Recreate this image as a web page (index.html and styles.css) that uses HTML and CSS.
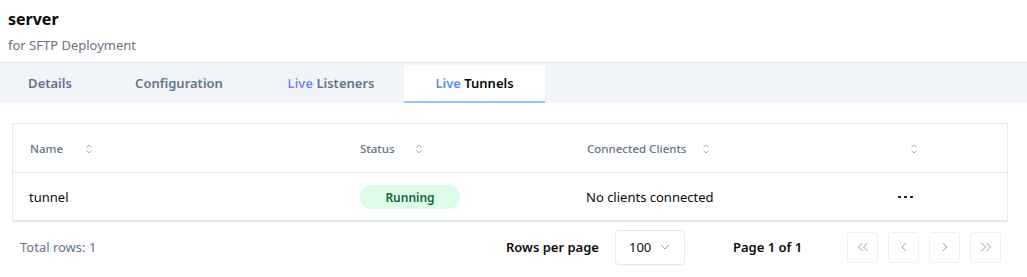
FILE: index.html
```html
<!DOCTYPE html>
<html>
<head>
<meta charset="utf-8">
<link rel="stylesheet" href="styles.css">
</head>
<body>
<header class="page-head">
  <h1 class="title">server</h1>
  <p class="subtitle">for SFTP Deployment</p>
</header>
<nav class="tabs">
  <div class="tab tab-details">Details</div>
  <div class="tab tab-config">Configuration</div>
  <div class="tab tab-listeners"><span class="live">Live</span> Listeners</div>
  <div class="tab tab-tunnels active"><span class="live-active">Live</span> Tunnels</div>
</nav>
<main class="content">
  <div class="table-card">
    <div class="row head-row">
      <div class="cell c-name"><span>Name</span><svg class="sort" viewBox="0 0 8 12"><path d="M1.5 4.5 L4 2 L6.5 4.5 M1.5 7.5 L4 10 L6.5 7.5" fill="none" stroke="currentColor" stroke-width="1"/></svg></div>
      <div class="cell c-status"><span>Status</span><svg class="sort" viewBox="0 0 8 12"><path d="M1.5 4.5 L4 2 L6.5 4.5 M1.5 7.5 L4 10 L6.5 7.5" fill="none" stroke="currentColor" stroke-width="1"/></svg></div>
      <div class="cell c-clients"><span>Connected Clients</span><svg class="sort" viewBox="0 0 8 12"><path d="M1.5 4.5 L4 2 L6.5 4.5 M1.5 7.5 L4 10 L6.5 7.5" fill="none" stroke="currentColor" stroke-width="1"/></svg></div>
      <div class="cell c-actions"><svg class="sort" viewBox="0 0 8 12"><path d="M1.5 4.5 L4 2 L6.5 4.5 M1.5 7.5 L4 10 L6.5 7.5" fill="none" stroke="currentColor" stroke-width="1"/></svg></div>
    </div>
    <div class="row body-row">
      <div class="cell c-name">tunnel</div>
      <div class="cell c-status"><span class="pill">Running</span></div>
      <div class="cell c-clients">No clients connected</div>
      <div class="cell c-actions"><span class="dots"><i></i><i></i><i></i></span></div>
    </div>
  </div>
  <div class="footer">
    <div class="total">Total rows: 1</div>
    <div class="rpp">Rows per page</div>
    <div class="select"><span>100</span><svg class="chev" viewBox="0 0 10 6"><path d="M1 1 L5 5 L9 1" fill="none" stroke="currentColor" stroke-width="1"/></svg></div>
    <div class="pageinfo">Page 1 of 1</div>
    <div class="pager">
      <button class="pbtn"><svg viewBox="0 0 14 12"><path d="M6.5 2 L2.5 6 L6.5 10 M11.5 2 L7.5 6 L11.5 10" fill="none" stroke="currentColor" stroke-width="1"/></svg></button>
      <button class="pbtn"><svg viewBox="0 0 14 12"><path d="M9 2 L5 6 L9 10" fill="none" stroke="currentColor" stroke-width="1"/></svg></button>
      <button class="pbtn"><svg viewBox="0 0 14 12"><path d="M5 2 L9 6 L5 10" fill="none" stroke="currentColor" stroke-width="1"/></svg></button>
      <button class="pbtn"><svg viewBox="0 0 14 12"><path d="M2.5 2 L6.5 6 L2.5 10 M7.5 2 L11.5 6 L7.5 10" fill="none" stroke="currentColor" stroke-width="1"/></svg></button>
    </div>
  </div>
</main>
</body>
</html>
```
FILE: styles.css
```css
* { box-sizing: border-box; }
html, body { margin: 0; padding: 0; background: #fff; }
body {
  font-family: "Segoe UI", "Noto Sans", "Open Sans", sans-serif;
  color: #0f172a;
  width: 1027px;
  height: 277px;
  overflow: hidden;
}
.page-head { padding: 6px 8px 0 8px; height: 62px; }
.title { margin: 0; font-size: 16px; font-weight: 700; line-height: 26px; color: #0b0b0b; }
.subtitle { margin: 2px 0 0 0; font-size: 13px; line-height: 22px; color: #6b7280; }

.tabs {
  display: flex;
  height: 41px;
  background: #f1f4f8;
  border-top: 1px solid #e2e8f0;
  padding-top: 2px;
}
.tab {
  display: flex;
  align-items: center;
  justify-content: center;
  font-size: 13px;
  font-weight: 600;
  color: #64748b;
  height: 38px;
  border-bottom: 2px solid transparent;
  white-space: pre;
}
.tab-details { width: 100px; }
.tab-config { width: 158px; }
.tab-listeners { width: 146px; }
.tab-tunnels { width: 141px; }
.tab.active { background: #fff; color: #0b0b0b; border-bottom-color: #93c5fd; }
.live {
  background: linear-gradient(90deg, #8b7cf6, #5b8def);
  -webkit-background-clip: text;
  background-clip: text;
  color: transparent;
}
.live-active { color: #5b8def; }

.content { padding: 20px 19px 0 12px; }
.table-card {
  border: 1px solid #e2e8f0;
  border-bottom-width: 2px;
}
.row { display: flex; }
.head-row { height: 49px; border-bottom: 1px solid #e2e8f0; padding-top: 1px; }
.body-row { height: 47px; padding-top: 1px; }
.cell { display: flex; align-items: center; padding-left: 17px; }
.c-name { width: 330px; }
.c-status { width: 227px; padding-left: 17px; }
.c-clients { width: 310px; }
.c-actions { flex: 1; }
.head-row .cell { font-size: 11.5px; font-weight: 500; color: #64748b; }
.head-row .cell span { margin-right: 16px; }
.c-name span { margin-right: 22px !important; }
.c-status span { margin-right: 20px !important; }
.sort { width: 8px; height: 12px; color: #a3adbb; }
.head-row .c-actions { padding-left: 30px; }
.body-row .cell { font-size: 13px; color: #0b0b0b; }
.body-row .c-name { padding-left: 16px; }
.body-row .c-clients { padding-left: 16px; }
.pill {
  display: inline-flex;
  align-items: center;
  justify-content: center;
  width: 100px;
  height: 24px;
  border-radius: 12px;
  background: #dcfce7;
  color: #166534;
  font-size: 12px;
  font-weight: 600;
}
.body-row .c-actions { padding-left: 18px; }
.dots { display: flex; gap: 3.5px; }
.dots i { width: 2.5px; height: 2.5px; background: #1e293b; display: block; }

.footer {
  display: flex;
  align-items: center;
  height: 50px;
  margin-left: 8px;
  font-size: 13px;
}
.total { color: #64748b; width: 486px; }
.rpp { font-weight: 600; color: #0b0b0b; width: 109px; }
.select {
  width: 70px;
  height: 35px;
  border: 1px solid #e2e8f0;
  border-radius: 4px;
  display: flex;
  align-items: center;
  padding-left: 13px;
  color: #0b0b0b;
  box-shadow: 0 1px 1px rgba(0,0,0,0.03);
}
.chev { width: 10px; height: 6px; margin-left: 9px; color: #94a3b8; }
.pageinfo { font-weight: 600; color: #0b0b0b; margin-left: 48px; width: 114px; }
.pager { display: flex; gap: 10px; }
.pbtn {
  width: 31px;
  height: 31px;
  border: 1px solid #eef0f3;
  border-radius: 3px;
  background: #fff;
  display: flex;
  align-items: center;
  justify-content: center;
  padding: 0;
  color: #94a3b8;
}
.pbtn svg { width: 14px; height: 12px; }
```
